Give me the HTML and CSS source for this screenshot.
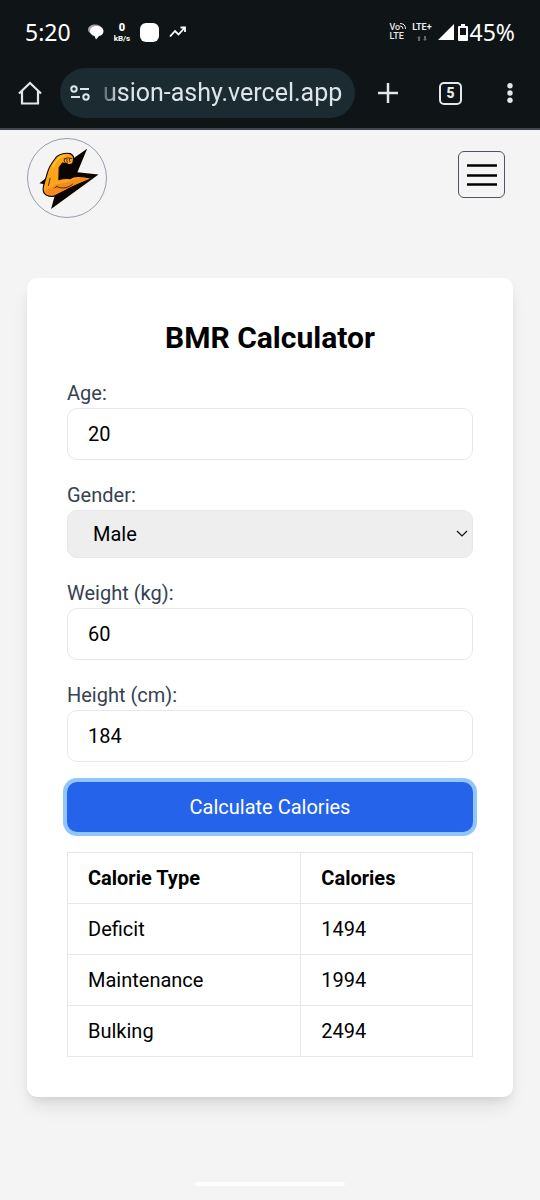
FILE: index.html
```html
<!DOCTYPE html>
<html lang="en">
<head>
<meta charset="utf-8">
<meta name="viewport" content="width=device-width, initial-scale=1">
<title>BMR Calculator</title>
<link rel="stylesheet" href="styles.css">
</head>
<body>
<div class="chrome">
  <div class="status">
    <span class="clock">5:20</span>
    <div class="notices">
      <svg width="16" height="16" viewBox="0 0 16 16" aria-hidden="true"><ellipse cx="7" cy="5.500" rx="7" ry="5" fill="#aaa6a8"/><path d="M8.500 2C12.500 2 15.500 4 15.500 7s-2 4.500-4.500 5L8 15.500 6.500 12C4 11.500 2 9.800 2 7s2.500-5 6.500-5z" fill="#fff"/></svg>
      <span class="rate"><b>0</b><span>kB/s</span></span>
      <span class="blob"></span>
      <svg width="18" height="14" viewBox="0 0 18 14" fill="none" stroke="#fff" stroke-width="1.800" aria-hidden="true"><path d="M1 11.500 6 6l3.500 3.500L15.500 3M11.500 2.500H16V7"/></svg>
    </div>
    <div class="signals">
      <span class="net volte"><span>Vo<svg width="6" height="6" viewBox="0 0 6 6" fill="none" stroke="#e8eaeb" aria-hidden="true"><path d="M0 .5Q5.500.5 5.500 6M0 3Q3 3 3 6"/></svg></span><span>LTE</span></span>
      <span class="net lte"><b>LTE+</b><svg width="10" height="5" viewBox="0 0 10 5" fill="#62686c" aria-hidden="true"><path d="M0 2 2 0l2 2H3v3H1V2zM6 3h1V0h2v3h1L8 5z"/></svg></span>
      <svg width="16" height="16" viewBox="0 0 16 16" aria-hidden="true"><path d="M16 0v16H0z" fill="#fff"/></svg>
      <svg class="battery" width="10" height="17" viewBox="0 0 10 17" aria-hidden="true"><path d="M3 0h4v2h2q1 0 1 1v13q0 1-1 1H1q-1 0-1-1V3q0-1 1-1h2zM2 4v7h6V4z" fill="#fff" fill-rule="evenodd"/></svg>
      <span class="percent">45%</span>
    </div>
  </div>
  <div class="toolbar">
    <button class="tool" aria-label="Home"><svg width="24" height="24" viewBox="0 0 24 24" fill="none" stroke="#e3e7e9" stroke-width="2.200"><path d="M1 12.500 12 2l11 10.500M4 10v12.500h16V10"/></svg></button>
    <div class="address">
      <svg width="20" height="16" viewBox="0 0 20 16" fill="none" stroke="#dce6ea" stroke-width="2" aria-hidden="true"><circle cx="4" cy="4" r="2.700"/><path d="M10 4h9M1 12h9"/><circle cx="16" cy="12" r="2.700"/></svg>
      <span class="url">usion-ashy.vercel.app</span>
    </div>
    <button class="tool plus" aria-label="New tab"><svg width="20" height="20" viewBox="0 0 20 20" stroke="#e3e7e9" stroke-width="2.500"><path d="M0 10h20M10 0v20"/></svg></button>
    <button class="tool tabs" aria-label="Open tabs">5</button>
    <button class="tool more" aria-label="More"><svg width="6" height="20" viewBox="0 0 6 20" fill="#e3e7e9"><circle cx="3" cy="2.700" r="2.700"/><circle cx="3" cy="10" r="2.700"/><circle cx="3" cy="17.300" r="2.700"/></svg></button>
  </div>
</div>
<header class="header">
  <a class="logo" href="#" aria-label="Home page">
    <svg viewBox="21 39 240 240">
      <path d="M203 69 173 141 238 148 92 254 103 214 90 208 72 178 56 175 76 160 112 118 150 106z" fill="#0b0502"/>
      <path d="M77 211C68 207 66 196 69 182L81 142C85 127 96 110 105 99 110 88 133 80 151 84 160 88 164 95 160 108L158 115 147 118 138 114 127 113 117 127 116 164C128 160 140 159 152 161 160 152 182 152 216 159L162 184 103 214C95 217 85 215 77 211z" fill="#fba41c" stroke="#120802" stroke-width="3.500" stroke-linejoin="round"/>
      <path d="M74 203C71 194 86 194 98 186 108 172 136 180 156 166 175 158 195 160 211 161L160 182 102 211C92 214 79 211 74 203z" fill="#f68a1c"/>
      <path d="M110 185C124 194 146 190 158 178M104 189l6-4M84 182l5-22M134 101q-5 6 1 10m6-10q-3 5 1 10m7-11q-3 6 1 9M132 100q10-6 24-1" fill="none" stroke="#28160a" stroke-width="2.500" stroke-linecap="round"/>
      <path d="M98 124Q111 95 132 90" fill="none" stroke="#ffc52f" stroke-width="5" stroke-linecap="round"/>
    </svg>
  </a>
  <button class="menu" aria-label="Menu"><svg width="30" height="22" viewBox="0 0 30 22" stroke="#000" stroke-width="2.400"><path d="M0 1.500h30M0 11.500h30M0 20.500h30"/></svg></button>
</header>
<main class="card">
  <h1>BMR Calculator</h1>
  <form class="form">
    <div class="field"><label for="age">Age:</label><input id="age" type="text" inputmode="numeric" value="20"></div>
    <div class="field"><label for="gender">Gender:</label>
      <div class="picker"><select id="gender"><option>Male</option><option>Female</option></select>
      <svg class="chevron" width="12" height="8" viewBox="0 0 12 8" fill="none" stroke="#111" stroke-width="1.200" aria-hidden="true"><path d="m1 1 5 5 5-5"/></svg></div>
    </div>
    <div class="field"><label for="weight">Weight (kg):</label><input id="weight" type="text" inputmode="numeric" value="60"></div>
    <div class="field"><label for="height">Height (cm):</label><input id="height" type="text" inputmode="numeric" value="184"></div>
    <button class="submit" type="button">Calculate Calories</button>
  </form>
  <table class="results">
    <thead><tr><th scope="col">Calorie Type</th><th scope="col">Calories</th></tr></thead>
    <tbody>
      <tr><td>Deficit</td><td>1494</td></tr>
      <tr><td>Maintenance</td><td>1994</td></tr>
      <tr><td>Bulking</td><td>2494</td></tr>
    </tbody>
  </table>
</main>
<footer class="gesture"><span class="handle"></span></footer>
</body>
</html>
```
FILE: styles.css
```css
* { box-sizing: border-box; }
body {
  margin: 0;
  min-height: 100vh;
  display: flex;
  flex-direction: column;
  background: #f4f4f4;
  color: #000;
  font: 20px/30px Roboto, sans-serif;
}
button, input, select { font: inherit; color: inherit; margin: 0; }
svg { display: block; flex: none; }

.chrome { background: #0f1416; color: #fff; border-bottom: 2px solid #41464c; }
.status { display: flex; align-items: center; height: 64px; padding: 0 25px; }
.clock, .percent { font: 23px/30px "Noto Sans", sans-serif; }
.notices { display: flex; align-items: center; gap: 10px; margin-left: 17px; }
.rate { display: flex; flex-direction: column; align-items: center; font: bold 8px/9px Roboto, sans-serif; }
.rate b { font-size: 11px; line-height: 12px; }
.blob { width: 19px; height: 19px; border-radius: 6px; background: #fff; }
.signals { display: flex; align-items: center; gap: 6px; margin-left: auto; }
.net { display: flex; flex-direction: column; color: #e8eaeb; font: 500 9px/9px Roboto, sans-serif; }
.volte > span { display: flex; }
.lte { align-items: center; gap: 4px; }
.battery { margin-left: -2px; }
.percent { margin-left: -4px; }

.toolbar { display: flex; align-items: center; height: 64px; padding: 0 27px 6px 18px; }
.tool { border: 0; padding: 0; background: none; color: #e3e7e9; }
.address {
  flex: 1;
  display: flex;
  align-items: center;
  gap: 13px;
  min-width: 0;
  height: 50px;
  margin-left: 18px;
  padding: 0 10px;
  border-radius: 25px;
  background: #1c2a31;
  color: #dce6ea;
}
.url {
  overflow: hidden;
  white-space: nowrap;
  font-size: 25px;
  mask-image: linear-gradient(to right, rgba(0, 0, 0, 0.3), #000 16px);
}
.plus { margin-left: 23px; }
.tabs {
  width: 23px;
  height: 23px;
  margin-left: 41px;
  border: 2px solid #e3e7e9;
  border-radius: 5px;
  font: 900 14px/18px Roboto, sans-serif;
}
.more { margin-left: 45px; }

.header {
  display: flex;
  align-items: center;
  justify-content: space-between;
  padding: 8px 35px 0 27px;
}
.logo { width: 80px; height: 80px; border: 1px solid #9a9aac; border-radius: 50%; overflow: hidden; }
.menu {
  display: grid;
  place-items: center;
  width: 47px;
  height: 47px;
  margin-bottom: 7px;
  padding: 0;
  border: 1px solid #4b5563;
  border-radius: 6px;
  background: none;
}

.card {
  margin: 60px 5% 0;
  padding: 40px;
  border-radius: 10px;
  background: #fff;
  box-shadow: 0 12px 19px -4px rgba(0, 0, 0, 0.1), 0 5px 8px -3px rgba(0, 0, 0, 0.08);
}
h1 { margin: 0 0 20px; font-size: 30px; line-height: 40px; font-weight: 700; text-align: center; }
.form { display: flex; flex-direction: column; gap: 20px; }
.field { display: flex; flex-direction: column; }
label { color: #374151; }
input, select { width: 100%; border-radius: 10px; }
input { height: 52px; padding: 10px 20px; border: 1px solid #e5e7eb; background: #fff; }
select {
  appearance: none;
  height: 48px;
  padding: 8px 25px;
  border: 1px solid #e5e7eb;
  background: #eee;
}
.picker { display: grid; align-items: center; }
.picker > * { grid-area: 1 / 1; }
.chevron { justify-self: end; margin-right: 5px; pointer-events: none; }
.submit {
  padding: 10px;
  border: 0;
  border-radius: 10px;
  background: #2563eb;
  color: #fff;
  box-shadow: 0 0 0 4px #93c5fd;
}
.results { width: 100%; margin-top: 20px; border-collapse: collapse; }
th, td { padding: 10px 20px; border: 1px solid #e5e7eb; text-align: left; }

.gesture { display: flex; justify-content: center; margin-top: auto; padding-bottom: 14px; }
.handle { width: 150px; height: 4px; border-radius: 2px; background: #fdfdfd; }
```
